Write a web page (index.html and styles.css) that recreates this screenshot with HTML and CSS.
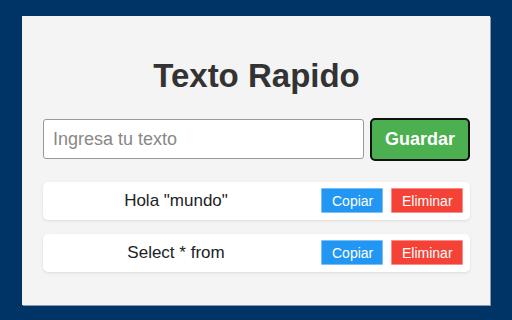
FILE: index.html
```html
<!DOCTYPE html>
<html lang="es">
  <head>
    <meta charset="UTF-8" />
    <meta name="viewport" content="width=device-width, initial-scale=1.0" />
    <title>Texto Rapido</title>
    <link rel="stylesheet" href="styles.css">
  </head>
  <body>
    <div class="container">
      <h1>Texto Rapido</h1>
      <div class="input-row">
        <input type="text" id="textInput" placeholder="Ingresa tu texto" />
        <button class="save-btn">Guardar</button>
      </div>
      <ul id="list" class="list">
        <li class="item">
          <span class="item-text">Hola "mundo"</span>
          <button class="copy-btn">Copiar</button>
          <button class="delete-btn">Eliminar</button>
        </li>
        <li class="item">
          <span class="item-text">Select * from</span>
          <button class="copy-btn">Copiar</button>
          <button class="delete-btn">Eliminar</button>
        </li>
      </ul>
    </div>
  </body>
</html>
```

FILE: styles.css
```css
body {
  margin: 0;
  height: 320px;
  display: flex;
  align-items: center;
  justify-content: center;
  background-color: #003366;
  font-family: "Liberation Sans", Arial, sans-serif;
}

.container {
  width: 427px;
  padding: 20px 20px 19px 21px;
  background-color: #f4f4f4;
  box-shadow: 1px 1px 0 #8a9bb0;
}

h1 {
  margin: 21px 0 23px;
  text-align: center;
  font-size: 33px;
  color: #333;
}

.input-row {
  display: flex;
  align-items: center;
  gap: 6px;
}

.input-row input {
  flex: 1;
  height: 40px;
  box-sizing: border-box;
  padding: 0 9px;
  border: 1px solid #999;
  border-radius: 3px;
  font-family: inherit;
  font-size: 18px;
  color: #333;
  background: white;
}

.input-row input::placeholder {
  color: #888;
}

.save-btn {
  width: 100px;
  height: 43px;
  background-color: #4caf50;
  color: white;
  border: 2px solid #111;
  border-radius: 5px;
  font-family: inherit;
  font-size: 18px;
  font-weight: bold;
  cursor: pointer;
}

.list {
  list-style: none;
  margin: 21px 0 0;
  padding: 0;
}

.item {
  display: flex;
  align-items: center;
  gap: 8px;
  height: 38px;
  box-sizing: border-box;
  padding: 0 7px 0 10px;
  margin-bottom: 14px;
  background: white;
  border-radius: 5px;
  box-shadow: 0 1px 3px rgba(0, 0, 0, 0.1);
}

.item-text {
  flex: 1;
  padding-right: 14px;
  text-align: center;
  font-size: 17px;
  color: #222;
}

.copy-btn,
.delete-btn {
  height: 25px;
  padding: 0 10px;
  border: 1px solid rgba(255, 255, 255, 0.4);
  border-radius: 1px;
  color: white;
  font-family: inherit;
  font-size: 14px;
  cursor: pointer;
}

.copy-btn {
  width: 62px;
  background-color: #2196f3;
}

.delete-btn {
  width: 72px;
  background-color: #f44336;
}
```
